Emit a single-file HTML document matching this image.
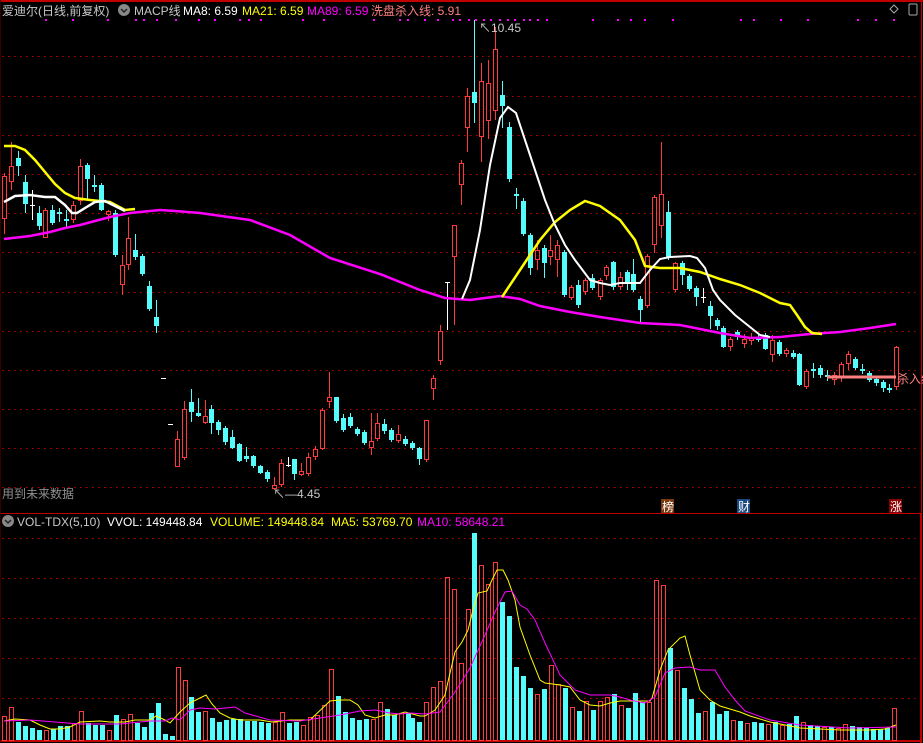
<!DOCTYPE html>
<html><head><meta charset="utf-8">
<style>
html,body{margin:0;padding:0;background:#000;}
body{width:923px;height:743px;overflow:hidden;position:relative;font-family:"Liberation Sans","Noto Sans CJK SC",sans-serif;}
svg{position:absolute;left:0;top:0;}
.t{font-family:"Liberation Sans","Noto Sans CJK SC",sans-serif;font-size:12px;}
</style></head><body>
<svg width="923" height="743" viewBox="0 0 923 743" xmlns="http://www.w3.org/2000/svg">
<rect width="923" height="743" fill="#000"/>
<!-- borders -->
<line x1="0" y1="1" x2="923" y2="1" stroke="#c00000" stroke-width="2"/>
<line x1="921.5" y1="0" x2="921.5" y2="743" stroke="#c00000" stroke-width="1"/>
<line x1="921" y1="513" x2="921" y2="743" stroke="#c00000" stroke-width="2"/>
<line x1="0" y1="513.5" x2="921" y2="513.5" stroke="#c00000" stroke-width="1"/>
<line x1="0" y1="741" x2="921" y2="741" stroke="#c00000" stroke-width="2"/>
<line x1="0.5" y1="0" x2="0.5" y2="743" stroke="#300" stroke-width="1"/>
<!-- grid -->
<g stroke="#c00000" stroke-width="1" stroke-dasharray="1.5 4.5">
<line x1="2" y1="56.5" x2="920" y2="56.5"/><line x1="2" y1="96.5" x2="920" y2="96.5"/>
<line x1="2" y1="135.5" x2="920" y2="135.5"/><line x1="2" y1="174.5" x2="920" y2="174.5"/>
<line x1="2" y1="213.5" x2="920" y2="213.5"/><line x1="2" y1="252.5" x2="920" y2="252.5"/>
<line x1="2" y1="292.5" x2="920" y2="292.5"/><line x1="2" y1="331.5" x2="920" y2="331.5"/>
<line x1="2" y1="370.5" x2="920" y2="370.5"/><line x1="2" y1="409.5" x2="920" y2="409.5"/>
<line x1="2" y1="448.5" x2="920" y2="448.5"/><line x1="2" y1="487.5" x2="920" y2="487.5"/>
<line x1="2" y1="538.5" x2="920" y2="538.5"/><line x1="2" y1="578.5" x2="920" y2="578.5"/>
<line x1="2" y1="618.5" x2="920" y2="618.5"/><line x1="2" y1="658.5" x2="920" y2="658.5"/>
<line x1="2" y1="698.5" x2="920" y2="698.5"/>
</g>
<!-- magenta dots -->
<g fill="#ff00ff">
<rect x="45" y="19" width="2" height="2"/><rect x="72" y="19" width="2" height="2"/><rect x="107" y="19" width="2" height="2"/><rect x="135" y="19" width="2" height="2"/><rect x="143" y="19" width="2" height="2"/><rect x="156" y="19" width="2" height="2"/><rect x="175" y="19" width="2" height="2"/><rect x="198" y="19" width="2" height="2"/><rect x="214" y="19" width="2" height="2"/><rect x="239" y="19" width="2" height="2"/><rect x="248" y="19" width="2" height="2"/><rect x="260" y="19" width="2" height="2"/><rect x="302" y="19" width="2" height="2"/><rect x="323" y="19" width="2" height="2"/><rect x="373" y="19" width="2" height="2"/><rect x="399" y="19" width="2" height="2"/><rect x="407" y="19" width="2" height="2"/><rect x="424" y="19" width="2" height="2"/><rect x="437" y="19" width="2" height="2"/><rect x="452" y="19" width="2" height="2"/><rect x="459" y="19" width="2" height="2"/><rect x="468" y="19" width="2" height="2"/><rect x="475" y="19" width="2" height="2"/><rect x="483" y="19" width="2" height="2"/><rect x="490" y="19" width="2" height="2"/><rect x="499" y="19" width="2" height="2"/><rect x="507" y="19" width="2" height="2"/><rect x="514" y="19" width="2" height="2"/><rect x="523" y="19" width="2" height="2"/><rect x="529" y="19" width="2" height="2"/><rect x="537" y="19" width="2" height="2"/><rect x="546" y="19" width="2" height="2"/><rect x="592" y="19" width="2" height="2"/><rect x="617" y="19" width="2" height="2"/><rect x="630" y="19" width="2" height="2"/><rect x="644" y="19" width="2" height="2"/><rect x="672" y="19" width="2" height="2"/><rect x="740" y="19" width="2" height="2"/><rect x="753" y="19" width="2" height="2"/><rect x="780" y="19" width="2" height="2"/><rect x="807" y="19" width="2" height="2"/><rect x="857" y="19" width="2" height="2"/><rect x="875" y="19" width="2" height="2"/><rect x="893" y="19" width="2" height="2"/>
</g>

<!-- cyan candles -->
<g stroke="#54fcfc" fill="#54fcfc" stroke-width="1">
<path d="M18.5 151V176M25.5 175V213M39.5 206V230M52.5 205V225M59.5 208V222M66.5 210V228M87.5 163V200M94.5 175V192M101.5 183V211M115.5 210V257M135.5 234V260M142.5 254V276M149.5 281V311M156.5 300V333M191.5 389V422M198.5 398V417M211.5 405V434M218.5 420V435M225.5 426V445M232.5 430V449M239.5 443V462M246.5 447V462M253.5 455V468M260.5 465V474M267.5 470V482M294.5 459V480M336.5 397V423M343.5 414V432M350.5 413V428M357.5 427V436M364.5 430V445M384.5 419V434M391.5 428V442M405.5 436V446M412.5 441V450M419.5 447V465M474.5 20V123M502.5 81V128M509.5 122V182M516.5 188V209M523.5 198V236M530.5 233V275M544.5 245V278M564.5 250V297M578.5 280V308M592.5 274V290M613.5 261V290M627.5 270V290M633.5 259V292M640.5 296V322M668.5 201V260M682.5 261V285M689.5 274V291M696.5 286V306M710.5 301V329M717.5 318V330M723.5 326V348M737.5 330V340M758.5 335V342M765.5 333V350M779.5 340V356M793.5 350V359M799.5 353V386M813.5 363V378M820.5 365V378M827.5 370V381M855.5 357V370M862.5 364V374M869.5 371V382M876.5 376V386M883.5 380V392M889.5 384V393" fill="none"/>
<g stroke="none">
<rect x="16" y="158" width="5" height="8"/><rect x="23" y="182" width="5" height="22"/><rect x="37" y="213" width="5" height="13"/><rect x="50" y="210" width="5" height="13"/><rect x="57" y="212" width="5" height="2"/><rect x="64" y="219" width="5" height="2"/><rect x="85" y="165" width="5" height="14"/><rect x="92" y="185" width="5" height="2"/><rect x="99" y="185" width="5" height="25"/><rect x="113" y="213" width="5" height="42"/><rect x="133" y="250" width="5" height="7"/><rect x="140" y="256" width="5" height="18"/><rect x="147" y="286" width="5" height="23"/><rect x="154" y="317" width="5" height="9"/>
<rect x="189" y="402" width="5" height="10"/><rect x="196" y="413" width="5" height="3"/><rect x="209" y="409" width="5" height="14"/><rect x="216" y="422" width="5" height="8"/><rect x="223" y="428" width="5" height="14"/><rect x="230" y="437" width="5" height="11"/><rect x="237" y="444" width="5" height="17"/><rect x="244" y="456" width="5" height="3"/><rect x="251" y="456" width="5" height="10"/><rect x="258" y="466" width="5" height="7"/><rect x="265" y="472" width="5" height="7"/><rect x="292" y="459" width="5" height="15"/>
<rect x="334" y="397" width="5" height="24"/><rect x="341" y="418" width="5" height="12"/><rect x="348" y="417" width="5" height="9"/><rect x="355" y="429" width="5" height="5"/><rect x="362" y="432" width="5" height="11"/><rect x="382" y="424" width="5" height="7"/><rect x="389" y="430" width="5" height="10"/><rect x="403" y="439" width="5" height="5"/><rect x="410" y="443" width="5" height="5"/><rect x="417" y="448" width="5" height="11"/>
<rect x="472" y="92" width="5" height="11"/><rect x="500" y="95" width="5" height="11"/><rect x="507" y="127" width="5" height="52"/><rect x="514" y="194" width="5" height="2"/><rect x="521" y="201" width="5" height="33"/><rect x="528" y="235" width="5" height="33"/><rect x="542" y="248" width="5" height="15"/><rect x="562" y="252" width="5" height="43"/><rect x="576" y="285" width="5" height="20"/><rect x="590" y="278" width="5" height="10"/>
<rect x="611" y="262" width="5" height="25"/><rect x="625" y="272" width="5" height="11"/><rect x="631" y="274" width="5" height="16"/><rect x="638" y="299" width="5" height="11"/><rect x="666" y="212" width="5" height="46"/><rect x="680" y="263" width="5" height="12"/><rect x="687" y="276" width="5" height="13"/><rect x="694" y="288" width="5" height="9"/><rect x="708" y="306" width="5" height="10"/><rect x="715" y="320" width="5" height="6"/><rect x="721" y="328" width="5" height="19"/><rect x="735" y="332" width="5" height="5"/><rect x="756" y="338" width="5" height="2"/><rect x="763" y="335" width="5" height="14"/><rect x="777" y="342" width="5" height="12"/><rect x="791" y="353" width="5" height="4"/><rect x="797" y="354" width="5" height="31"/><rect x="811" y="369" width="5" height="2"/><rect x="818" y="368" width="5" height="7"/><rect x="825" y="375" width="5" height="2"/><rect x="853" y="359" width="5" height="9"/><rect x="860" y="369" width="5" height="2"/><rect x="867" y="373" width="5" height="7"/><rect x="874" y="379" width="5" height="4"/><rect x="881" y="382" width="5" height="6"/><rect x="887" y="388" width="5" height="2"/>
</g></g>

<!-- red candles -->
<g stroke="#ff3a3a" stroke-width="1">
<path d="M4.5 173V234M11.5 142V190M45.5 208V238M73.5 201V223M80.5 159V205M108.5 210V221M122.5 255V295M128.5 217V270M177.5 431V467M184.5 401V460M205.5 400V424M274.5 477V490M281.5 459V487M301.5 463V476M308.5 453V476M315.5 446V460M322.5 408V450M329.5 372V408M371.5 413V455M377.5 413V441M398.5 425V443M426.5 420V462M433.5 375V400M440.5 325V365M454.5 225V325M461.5 160V205M467.5 88V152M481.5 63V162M488.5 60V139M495.5 27V120M537.5 240V270M550.5 235V265M557.5 240V277M571.5 285V300M585.5 278V295M600.5 278V300M606.5 265V280M620.5 272V290M647.5 254V308M654.5 195V253M661.5 142V238M675.5 262V292M730.5 337V351M744.5 334V348M751.5 333V345M772.5 335V362M786.5 348V357M806.5 369V389M834.5 372V385M841.5 362V382M848.5 351V370M896.5 346V390"/>
<g fill="#000">
<rect x="2.5" y="176.5" width="4" height="42"/><rect x="9.5" y="166.5" width="4" height="15"/><rect x="43.5" y="210.5" width="4" height="27"/><rect x="71.5" y="205.5" width="4" height="14"/><rect x="78.5" y="166.5" width="4" height="34"/><rect x="106.5" y="211.5" width="4" height="3"/><rect x="120.5" y="265.5" width="4" height="19"/><rect x="126.5" y="238.5" width="4" height="26"/>
<rect x="175.5" y="439.5" width="4" height="27"/><rect x="182.5" y="409.5" width="4" height="48"/><rect x="203.5" y="416.5" width="4" height="6"/><rect x="272.5" y="485.5" width="4" height="3"/><rect x="279.5" y="463.5" width="4" height="21"/><rect x="299.5" y="471.5" width="4" height="3"/><rect x="306.5" y="457.5" width="4" height="16"/><rect x="313.5" y="449.5" width="4" height="7"/><rect x="320.5" y="410.5" width="4" height="38"/><rect x="327.5" y="397.5" width="4" height="4"/><rect x="369.5" y="441.5" width="4" height="6"/><rect x="375.5" y="423.5" width="4" height="15"/><rect x="396.5" y="434.5" width="4" height="6"/><rect x="424.5" y="420.5" width="4" height="39"/><rect x="431.5" y="378.5" width="4" height="10"/><rect x="438.5" y="331.5" width="4" height="29"/>
<rect x="452.5" y="225.5" width="4" height="31"/><rect x="459.5" y="163.5" width="4" height="21"/><rect x="465.5" y="96.5" width="4" height="31"/><rect x="479.5" y="81.5" width="4" height="55"/><rect x="486.5" y="83.5" width="4" height="37"/><rect x="493.5" y="49.5" width="4" height="61"/><rect x="535.5" y="250.5" width="4" height="9"/><rect x="548.5" y="250.5" width="4" height="6"/><rect x="555.5" y="245.5" width="4" height="14"/><rect x="569.5" y="287.5" width="4" height="10"/><rect x="583.5" y="280.5" width="4" height="11"/>
<rect x="598.5" y="280.5" width="4" height="16"/><rect x="604.5" y="267.5" width="4" height="8"/><rect x="618.5" y="277.5" width="4" height="9"/><rect x="645.5" y="256.5" width="4" height="49"/><rect x="652.5" y="197.5" width="4" height="47"/><rect x="659.5" y="194.5" width="4" height="31"/><rect x="673.5" y="263.5" width="4" height="26"/><rect x="728.5" y="339.5" width="4" height="7"/><rect x="742.5" y="339.5" width="4" height="4"/><rect x="749.5" y="337.5" width="4" height="3"/><rect x="770.5" y="340.5" width="4" height="14"/><rect x="784.5" y="350.5" width="4" height="3"/><rect x="804.5" y="371.5" width="4" height="15"/><rect x="832.5" y="375.5" width="4" height="4"/><rect x="839.5" y="364.5" width="4" height="12"/><rect x="846.5" y="354.5" width="4" height="9"/><rect x="894.5" y="347.5" width="4" height="39"/>
</g></g>
<!-- white doji / dashes -->
<g stroke="#fff" stroke-width="1">
<path d="M32.5 190V220M30 205.5H35M288.5 457V467M286 465.5H291M447.5 282V330M445 282.5H450M703.5 288V303M701 297.5H706M161 378.5H166M168 424.5H173"/>
</g>

<!-- MA lines -->
<polyline fill="none" stroke="#ff00ff" stroke-width="2.5" points="4,239 30,236 50,232 65,228 80,225 95,221 110,217 130,213 160,210 175,211 200,213 250,220 290,235 330,258 380,274 420,290 445,298 470,300 500,296 520,299 540,306 570,312 600,317 640,323 680,325 720,333 750,338 780,337 810,334 840,332 870,328 896,324"/>
<polyline fill="none" stroke="#ffff00" stroke-width="2.5" points="4,146 15,146 25,150 35,160 45,172 55,184 65,193 75,198 90,200 110,202 125,210 135,209"/>
<polyline fill="none" stroke="#ffff00" stroke-width="2.5" points="502,297 520,270 540,240 555,222 570,210 585,201 600,206 620,220 635,240 645,266 660,268 680,268 700,272 720,279 740,285 760,293 780,303 790,305 797,315 805,327 812,333 822,334"/>
<polyline fill="none" stroke="#ffffff" stroke-width="2.5" points="4,202 15,196 30,195 45,197 55,197 65,205 72,213 77,213 85,208 95,202 105,201 115,206 125,211"/>
<polyline fill="none" stroke="#ffffff" stroke-width="2" points="462,299 470,280 480,230 490,165 500,118 508,107 516,113 525,140 535,170 545,200 555,225 565,245 575,260 590,280 600,283 610,285 620,283 640,283 650,270 660,259 670,257 690,256 697,258 705,268 713,290 720,300 735,315 750,327 760,335 770,337"/>
<!-- kill line -->
<line x1="827" y1="377" x2="896" y2="377" stroke="#ff8080" stroke-width="3"/>
<text x="897" y="383" class="t" fill="#ff8080">杀入线</text>

<!-- labels -->
<text x="2" y="15" class="t" fill="#c8c8c8" font-size="13">爱迪尔(日线,前复权)</text>
<circle cx="124" cy="10" r="6" fill="#888"/><path d="M121 9l3 3 3-3" stroke="#222" stroke-width="1.5" fill="none"/>
<text x="134" y="15" class="t" fill="#c8c8c8">MACP线</text>
<text x="183" y="15" class="t" fill="#ffffff">MA8: 6.59</text>
<text x="242" y="15" class="t" fill="#ffff00">MA21: 6.59</text>
<text x="307" y="15" class="t" fill="#ff00ff">MA89: 6.59</text>
<text x="371" y="15" class="t" fill="#ff8080">洗盘杀入线: 5.91</text>
<path d="M890 9l4-4 4 4-4 4z" stroke="#aaa" fill="none"/>
<rect x="909" y="4" width="8" height="11" stroke="#aaa" fill="none" rx="1"/>
<text x="479" y="32" class="t" fill="#c8c8c8">↖10.45</text>
<text x="273" y="498" class="t" fill="#c8c8c8">↖—4.45</text>
<text x="2" y="498" class="t" fill="#909090">用到未来数据</text>
<rect x="661" y="499" width="13" height="14" fill="#7a3a10"/><text x="662" y="511" class="t" fill="#fff">榜</text>
<rect x="737" y="499" width="13" height="14" fill="#1a4a80"/><text x="738" y="511" class="t" fill="#fff">财</text>
<rect x="889" y="499" width="13" height="14" fill="#8a0000"/><text x="890" y="511" class="t" fill="#fff">涨</text>

<circle cx="8" cy="521" r="6" fill="#888"/><path d="M5 520l3 3 3-3" stroke="#222" stroke-width="1.5" fill="none"/>
<text x="17" y="526" class="t" fill="#c8c8c8">VOL-TDX(5,10)</text>
<text x="107" y="526" class="t" fill="#ffffff">VVOL: 149448.84</text>
<text x="210" y="526" class="t" fill="#ffff00">VOLUME: 149448.84</text>
<text x="331" y="526" class="t" fill="#ffff00">MA5: 53769.70</text>
<text x="417" y="526" class="t" fill="#ff00ff">MA10: 58648.21</text>

<!-- volume cyan bars -->
<g fill="#54fcfc">
<rect x="16" y="722" width="5" height="18"/><rect x="23" y="726" width="5" height="14"/><rect x="30" y="728" width="5" height="12"/><rect x="37" y="730" width="5" height="10"/><rect x="51" y="729" width="5" height="11"/><rect x="58" y="726" width="5" height="14"/><rect x="65" y="726" width="5" height="14"/><rect x="86" y="723" width="5" height="17"/><rect x="93" y="725" width="5" height="15"/><rect x="100" y="725" width="5" height="15"/><rect x="114" y="715" width="5" height="25"/><rect x="135" y="723" width="5" height="17"/><rect x="142" y="727" width="5" height="13"/><rect x="149" y="713" width="5" height="27"/><rect x="156" y="703" width="5" height="37"/><rect x="163" y="734" width="5" height="6"/><rect x="170" y="736" width="5" height="4"/><rect x="189" y="697" width="5" height="43"/><rect x="196" y="712" width="5" height="28"/><rect x="210" y="718" width="5" height="22"/><rect x="217" y="722" width="5" height="18"/><rect x="224" y="720" width="5" height="20"/><rect x="231" y="719" width="5" height="21"/><rect x="238" y="719" width="5" height="21"/><rect x="245" y="721" width="5" height="19"/><rect x="252" y="721" width="5" height="19"/><rect x="259" y="722" width="5" height="18"/><rect x="266" y="723" width="5" height="17"/><rect x="287" y="723" width="5" height="17"/><rect x="294" y="722" width="5" height="18"/><rect x="336" y="696" width="5" height="44"/><rect x="343" y="712" width="5" height="28"/><rect x="350" y="718" width="5" height="22"/><rect x="357" y="720" width="5" height="20"/><rect x="364" y="719" width="5" height="21"/><rect x="385" y="709" width="5" height="31"/><rect x="392" y="715" width="5" height="25"/><rect x="406" y="713" width="5" height="27"/><rect x="410" y="718" width="5" height="22"/><rect x="417" y="722" width="5" height="18"/>
<rect x="472" y="533" width="5" height="207"/><rect x="500" y="602" width="5" height="138"/><rect x="507" y="616" width="5" height="124"/><rect x="514" y="667" width="5" height="73"/><rect x="521" y="676" width="5" height="64"/><rect x="528" y="688" width="5" height="52"/><rect x="542" y="689" width="5" height="51"/><rect x="563" y="688" width="5" height="52"/><rect x="577" y="711" width="5" height="29"/><rect x="591" y="710" width="5" height="30"/><rect x="612" y="694" width="5" height="46"/><rect x="626" y="708" width="5" height="32"/><rect x="633" y="693" width="5" height="47"/><rect x="640" y="702" width="5" height="38"/><rect x="668" y="648" width="5" height="92"/><rect x="682" y="688" width="5" height="52"/><rect x="689" y="699" width="5" height="41"/><rect x="696" y="713" width="5" height="27"/><rect x="710" y="702" width="5" height="38"/><rect x="717" y="714" width="5" height="26"/><rect x="724" y="711" width="5" height="29"/><rect x="738" y="721" width="5" height="19"/>
<rect x="752" y="722" width="5" height="18"/><rect x="759" y="723" width="5" height="17"/><rect x="773" y="722" width="5" height="18"/><rect x="787" y="724" width="5" height="16"/><rect x="794" y="716" width="5" height="24"/><rect x="808" y="725" width="5" height="15"/><rect x="815" y="726" width="5" height="14"/><rect x="829" y="727" width="5" height="13"/><rect x="850" y="726" width="5" height="14"/><rect x="857" y="727" width="5" height="13"/><rect x="864" y="728" width="5" height="12"/><rect x="871" y="729" width="5" height="11"/><rect x="878" y="729" width="5" height="11"/><rect x="885" y="728" width="5" height="12"/>
</g>
<!-- volume red bars -->
<g fill="none" stroke="#ff3a3a" stroke-width="1">
<rect x="2.5" y="716.5" width="4" height="24"/><rect x="9.5" y="707.5" width="4" height="33"/><rect x="44.5" y="730.5" width="4" height="10"/><rect x="72.5" y="723.5" width="4" height="17"/><rect x="79.5" y="711.5" width="4" height="29"/><rect x="107.5" y="730.5" width="4" height="10"/><rect x="121.5" y="719.5" width="4" height="21"/><rect x="128.5" y="714.5" width="4" height="26"/><rect x="176.5" y="667.5" width="4" height="73"/><rect x="183.5" y="680.5" width="4" height="60"/><rect x="203.5" y="711.5" width="4" height="29"/><rect x="273.5" y="722.5" width="4" height="18"/><rect x="280.5" y="712.5" width="4" height="28"/><rect x="301.5" y="725.5" width="4" height="15"/><rect x="308.5" y="717.5" width="4" height="23"/><rect x="315.5" y="715.5" width="4" height="25"/><rect x="322.5" y="705.5" width="4" height="35"/><rect x="329.5" y="669.5" width="4" height="71"/><rect x="371.5" y="719.5" width="4" height="21"/><rect x="378.5" y="702.5" width="4" height="38"/><rect x="399.5" y="713.5" width="4" height="27"/>
<rect x="424.5" y="702.5" width="4" height="38"/><rect x="431.5" y="687.5" width="4" height="53"/><rect x="438.5" y="681.5" width="4" height="59"/><rect x="445.5" y="577.5" width="4" height="163"/><rect x="452.5" y="589.5" width="4" height="151"/><rect x="459.5" y="663.5" width="4" height="77"/><rect x="466.5" y="609.5" width="4" height="131"/><rect x="479.5" y="565.5" width="4" height="175"/><rect x="486.5" y="584.5" width="4" height="156"/><rect x="493.5" y="562.5" width="4" height="178"/><rect x="535.5" y="694.5" width="4" height="46"/><rect x="549.5" y="665.5" width="4" height="75"/><rect x="556.5" y="684.5" width="4" height="56"/><rect x="570.5" y="707.5" width="4" height="33"/><rect x="584.5" y="701.5" width="4" height="39"/><rect x="598.5" y="701.5" width="4" height="39"/><rect x="605.5" y="697.5" width="4" height="43"/><rect x="619.5" y="705.5" width="4" height="35"/><rect x="647.5" y="702.5" width="4" height="38"/><rect x="654.5" y="580.5" width="4" height="160"/><rect x="661.5" y="585.5" width="4" height="155"/><rect x="675.5" y="670.5" width="4" height="70"/><rect x="703.5" y="711.5" width="4" height="29"/><rect x="731.5" y="720.5" width="4" height="20"/><rect x="745.5" y="723.5" width="4" height="17"/><rect x="766.5" y="724.5" width="4" height="16"/><rect x="780.5" y="725.5" width="4" height="15"/><rect x="801.5" y="722.5" width="4" height="18"/><rect x="822.5" y="727.5" width="4" height="13"/><rect x="836.5" y="728.5" width="4" height="12"/><rect x="843.5" y="724.5" width="4" height="16"/><rect x="892.5" y="708.5" width="4" height="32"/>
</g>
<!-- volume MAs -->
<polyline fill="none" stroke="#ffff00" stroke-width="1" points="4,721 15,719 30,720 40,725 50,729 60,729 70,727 80,722 100,721 110,722 125,722 135,720 150,720 156,716 165,720 170,723 180,712 190,703 200,698 206,695 212,704 220,713 230,718 240,720 260,720 272,722 290,720 310,720 330,701 340,700 350,700 358,705 365,715 375,718 385,715 395,715 405,712 420,716 425,716 435,710 445,695 450,673 455,652 462,642 468,630 473,610 478,593 487,591 492,580 497,570 503,570 508,580 515,600 520,627 530,655 540,680 545,683 560,685 570,687 580,700 590,705 600,706 610,703 620,701 650,701 652,698 660,670 668,650 680,638 685,636 690,655 700,690 710,700 720,706 730,709 740,712 750,716 770,722 800,728 840,730 870,730 885,729 896,725"/>
<polyline fill="none" stroke="#ff00ff" stroke-width="1" points="4,721 30,720 80,724 120,724 150,721 165,721 172,718 180,720 190,710 200,708 215,709 225,708 235,707 245,713 270,720 300,721 340,715 360,711 375,710 390,713 400,714 410,713 425,714 440,712 455,692 470,668 485,635 495,612 505,592 512,591 520,605 527,609 535,620 545,643 560,675 575,690 590,695 610,695 620,697 630,700 645,703 655,697 665,673 675,668 690,667 700,670 715,670 725,687 735,700 745,711 770,720 800,725 850,728 896,727"/>
</svg>
</body></html>
